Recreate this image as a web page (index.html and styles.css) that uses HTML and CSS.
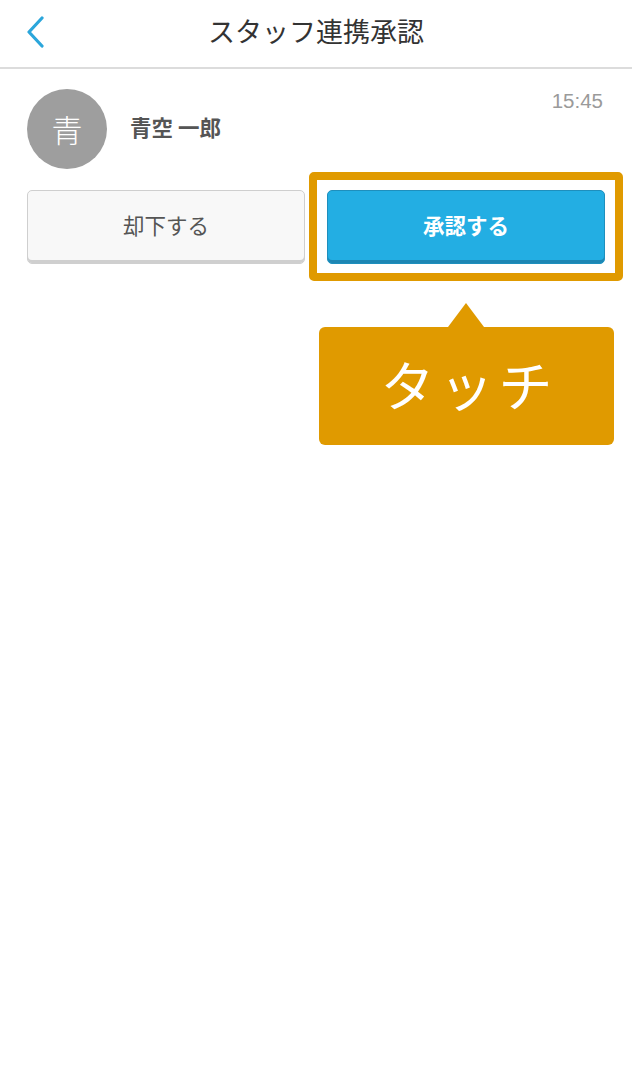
FILE: index.html
```html
<!DOCTYPE html>
<html lang="ja">
<head>
<meta charset="utf-8">
<title>スタッフ連携承認</title>
<link rel="stylesheet" href="styles.css">
</head>
<body>
<header class="nav">
  <a class="back" aria-label="戻る">
    <svg width="20" height="32" viewBox="0 0 20 32"><path d="M16 2 L3 16 L16 30" fill="none" stroke="#2ba6db" stroke-width="3.2" stroke-linecap="round" stroke-linejoin="round"/></svg>
  </a>
  <h1 class="title">スタッフ連携承認</h1>
</header>
<main class="content">
  <div class="item">
    <div class="avatar">青</div>
    <div class="name">青空 一郎</div>
    <div class="time">15:45</div>
  </div>
  <div class="actions">
    <button class="btn btn-reject">却下する</button>
    <div class="approve-wrap">
      <button class="btn btn-approve">承認する</button>
      <div class="highlight"></div>
      <div class="tip">
        <div class="tip-arrow"></div>
        <div class="tip-box">タッチ</div>
      </div>
    </div>
  </div>
</main>
</body>
</html>
```

FILE: styles.css
```css
* { box-sizing: border-box; }
html, body { margin: 0; padding: 0; background: #fff; }
body {
  font-family: "Noto Sans CJK JP", "Noto Sans", sans-serif;
  width: 632px;
  height: 1086px;
  overflow: hidden;
}
.nav {
  position: relative;
  height: 69px;
  border-bottom: 2px solid #dcdcdc;
  display: flex;
  align-items: center;
  justify-content: center;
}
.back {
  position: absolute;
  left: 26px;
  top: 16px;
  display: block;
  width: 20px;
  height: 32px;
}
.back svg { display: block; }
.title {
  margin: 0;
  font-size: 27px;
  font-weight: 400;
  color: #333;
  line-height: 1;
  margin-top: -6px;
}
.content { padding: 0 27px; }
.item {
  display: flex;
  align-items: flex-start;
  padding-top: 20px;
  height: 121px;
}
.avatar {
  width: 80px;
  height: 80px;
  border-radius: 50%;
  background: #9e9e9e;
  color: #fff;
  font-size: 31px;
  font-weight: 300;
  line-height: 80px;
  text-align: center;
  flex: none;
}
.name {
  margin-left: 23px;
  margin-top: 23px;
  font-size: 21.5px;
  font-weight: 700;
  color: #555;
  line-height: 30px;
  flex: 1;
}
.time {
  font-family: "Helvetica Neue", "Liberation Sans", Arial, sans-serif;
  font-size: 20.5px;
  color: #9a9a9a;
  line-height: 22px;
  margin-top: 1px;
  margin-right: 2px;
}
.actions {
  display: flex;
  gap: 22px;
}
.btn {
  display: block;
  width: 278px;
  height: 74px;
  border-radius: 5px;
  font-family: "Noto Sans CJK JP", sans-serif;
  font-size: 21.5px;
  padding: 0 0 5px;
  margin: 0;
  cursor: pointer;
}
.btn-reject {
  background: #f8f8f8;
  border: 1px solid #cfcfcf;
  box-shadow: inset 0 -3px 0 #cfcfcf;
  color: #555;
}
.approve-wrap {
  position: relative;
  width: 278px;
}
.btn-approve {
  background: #23aee3;
  border: 1px solid #1e8fbd;
  box-shadow: inset 0 -3px 0 #1d86b3;
  color: #fff;
  font-weight: 700;
}
.highlight {
  position: absolute;
  left: -18px;
  top: -18px;
  right: -18px;
  bottom: -17px;
  border: 8px solid #e09a00;
  border-radius: 5px;
  pointer-events: none;
}
.tip {
  position: absolute;
  left: -8px;
  top: 113px;
  width: 295px;
}
.tip-arrow {
  width: 0;
  height: 0;
  margin-left: 129px;
  border-left: 18px solid transparent;
  border-right: 18px solid transparent;
  border-bottom: 24px solid #e09a00;
}
.tip-box {
  height: 118px;
  background: #e09a00;
  border-radius: 6px;
  color: #fff;
  font-size: 54px;
  letter-spacing: 5px;
  text-indent: 5px;
  text-align: center;
  line-height: 114px;
}
```
